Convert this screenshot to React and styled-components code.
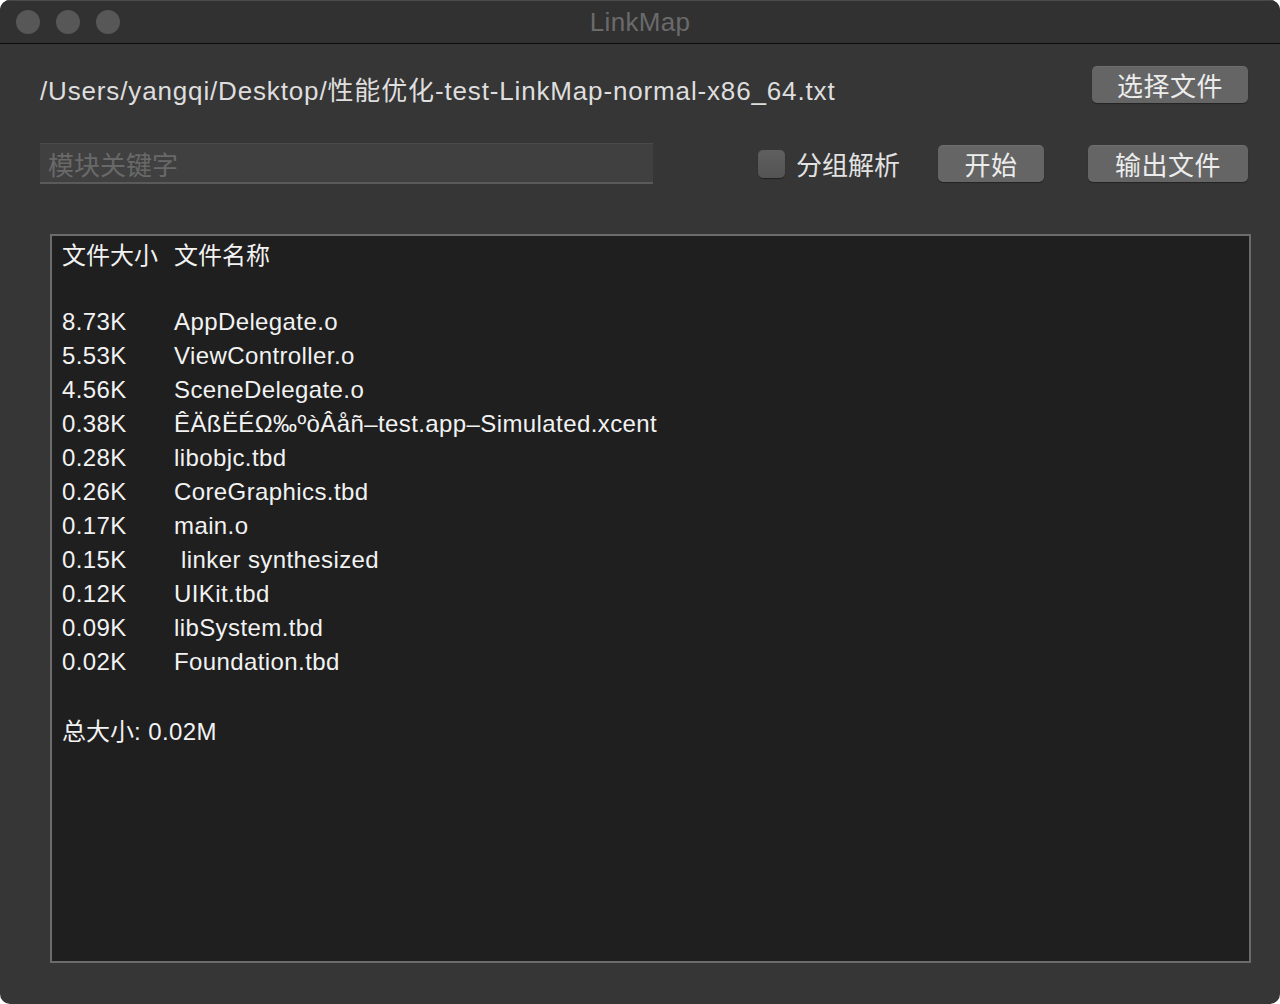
import React from 'react';
import styled, { createGlobalStyle } from 'styled-components';

const GlobalStyle = createGlobalStyle`
  html, body {
    margin: 0;
    padding: 0;
    background: #ffffff;
  }
  body {
    font-family: "Liberation Sans", "Noto Sans CJK SC", sans-serif;
  }
`;

const Window = styled.div`
  width: 1280px;
  height: 1004px;
  display: flex;
  flex-direction: column;
  background-color: #363636;
  border-radius: 10px;
  overflow: hidden;
  box-sizing: border-box;
`;

const TitleBar = styled.div`
  height: 44px;
  flex: none;
  display: grid;
  grid-template-columns: 1fr auto 1fr;
  align-items: center;
  background-color: #313131;
  border-top: 1px solid #4a4a4a;
  border-bottom: 1px solid #0c0c0c;
  box-sizing: border-box;
`;

const Lights = styled.div`
  display: flex;
  gap: 16px;
  padding-left: 16px;
`;

const Light = styled.span`
  width: 24px;
  height: 24px;
  border-radius: 50%;
  background-color: #575757;
`;

const Title = styled.div`
  font-size: 26px;
  color: #6a6a6a;
  letter-spacing: 0.3px;
`;

const Content = styled.div`
  flex: 1;
  display: flex;
  flex-direction: column;
  padding: 22px 29px 41px 40px;
  min-height: 0;
`;

const FileRow = styled.div`
  display: flex;
  justify-content: space-between;
  align-items: flex-start;
  padding-right: 3px;
`;

const PathText = styled.div`
  margin-top: 10px;
  font-size: 26px;
  line-height: 30px;
  letter-spacing: 0.85px;
  color: #dedede;
`;

const Button = styled.button`
  height: 37px;
  width: ${({ $width }) => $width}px;
  padding: 0;
  border: none;
  border-radius: 5px;
  background-color: #656565;
  box-shadow: 0 1px 1px rgba(0, 0, 0, 0.35), inset 0 1px 0 rgba(255, 255, 255, 0.06);
  color: #ececec;
  font-family: "Noto Sans CJK SC", "Liberation Sans", sans-serif;
  font-size: 26px;
  line-height: 37px;
  letter-spacing: 0.5px;
`;

const ControlRow = styled.div`
  display: flex;
  align-items: center;
  margin-top: 37px;
  padding-right: 3px;
`;

const KeywordInput = styled.input`
  width: 613px;
  height: 41px;
  box-sizing: border-box;
  padding: 0 8px;
  background-color: #404040;
  border: none;
  border-top: 1px solid #4b4b4b;
  border-bottom: 2px solid #5a5a5a;
  color: #e0e0e0;
  font-family: "Noto Sans CJK SC", sans-serif;
  font-size: 26px;
  outline: none;

  &::placeholder {
    color: #696969;
  }
`;

const CheckGroup = styled.label`
  margin-left: auto;
  display: flex;
  align-items: center;
  gap: 11px;
  margin-right: 38px;
  color: #e2e2e2;
  font-family: "Noto Sans CJK SC", sans-serif;
  font-size: 26px;
  line-height: 30px;
`;

const CheckBox = styled.span`
  width: 27px;
  height: 28px;
  border-radius: 5px;
  background: linear-gradient(#5f5f5f, #535353);
  box-shadow: 0 1px 1px rgba(0, 0, 0, 0.4);
`;

const ButtonGap = styled.div`
  width: 44px;
`;

const Output = styled.div`
  flex: 1;
  margin: 50px 0 0 10px;
  border: 2px solid #6b6b6b;
  background-color: #1f1f1f;
  padding: 1px 10px 0;
  color: #f2f2f2;
  font-size: 24px;
  line-height: 34px;
  letter-spacing: 0.4px;
`;

const Line = styled.div`
  display: grid;
  grid-template-columns: 112px 1fr;
  white-space: pre;
  height: 34px;
`;

const Cjk = styled.span`
  font-family: "Noto Sans CJK SC", sans-serif;
  letter-spacing: 0;
`;

const rows = [
  ['8.73K', 'AppDelegate.o'],
  ['5.53K', 'ViewController.o'],
  ['4.56K', 'SceneDelegate.o'],
  ['0.38K', 'ÊÄßËÉΩ‰ºòÂåñ–test.app–Simulated.xcent'],
  ['0.28K', 'libobjc.tbd'],
  ['0.26K', 'CoreGraphics.tbd'],
  ['0.17K', 'main.o'],
  ['0.15K', ' linker synthesized'],
  ['0.12K', 'UIKit.tbd'],
  ['0.09K', 'libSystem.tbd'],
  ['0.02K', 'Foundation.tbd'],
];

export default function App() {
  return (
    <>
      <GlobalStyle />
      <Window>
        <TitleBar>
          <Lights>
            <Light />
            <Light />
            <Light />
          </Lights>
          <Title>LinkMap</Title>
          <div />
        </TitleBar>
        <Content>
          <FileRow>
            <PathText>/Users/yangqi/Desktop/性能优化-test-LinkMap-normal-x86_64.txt</PathText>
            <Button $width={156}>选择文件</Button>
          </FileRow>
          <ControlRow>
            <KeywordInput placeholder="模块关键字" />
            <CheckGroup>
              <CheckBox />
              分组解析
            </CheckGroup>
            <Button $width={106}>开始</Button>
            <ButtonGap />
            <Button $width={160}>输出文件</Button>
          </ControlRow>
          <Output>
            <Line>
              <Cjk>文件大小</Cjk>
              <Cjk>文件名称</Cjk>
            </Line>
            <Line />
            {rows.map(([size, name]) => (
              <Line key={size + name}>
                <span>{size}</span>
                <span>{name}</span>
              </Line>
            ))}
            <Line />
            <Line>
              <span>
                <Cjk>总大小</Cjk>: 0.02M
              </span>
            </Line>
          </Output>
        </Content>
      </Window>
    </>
  );
}
